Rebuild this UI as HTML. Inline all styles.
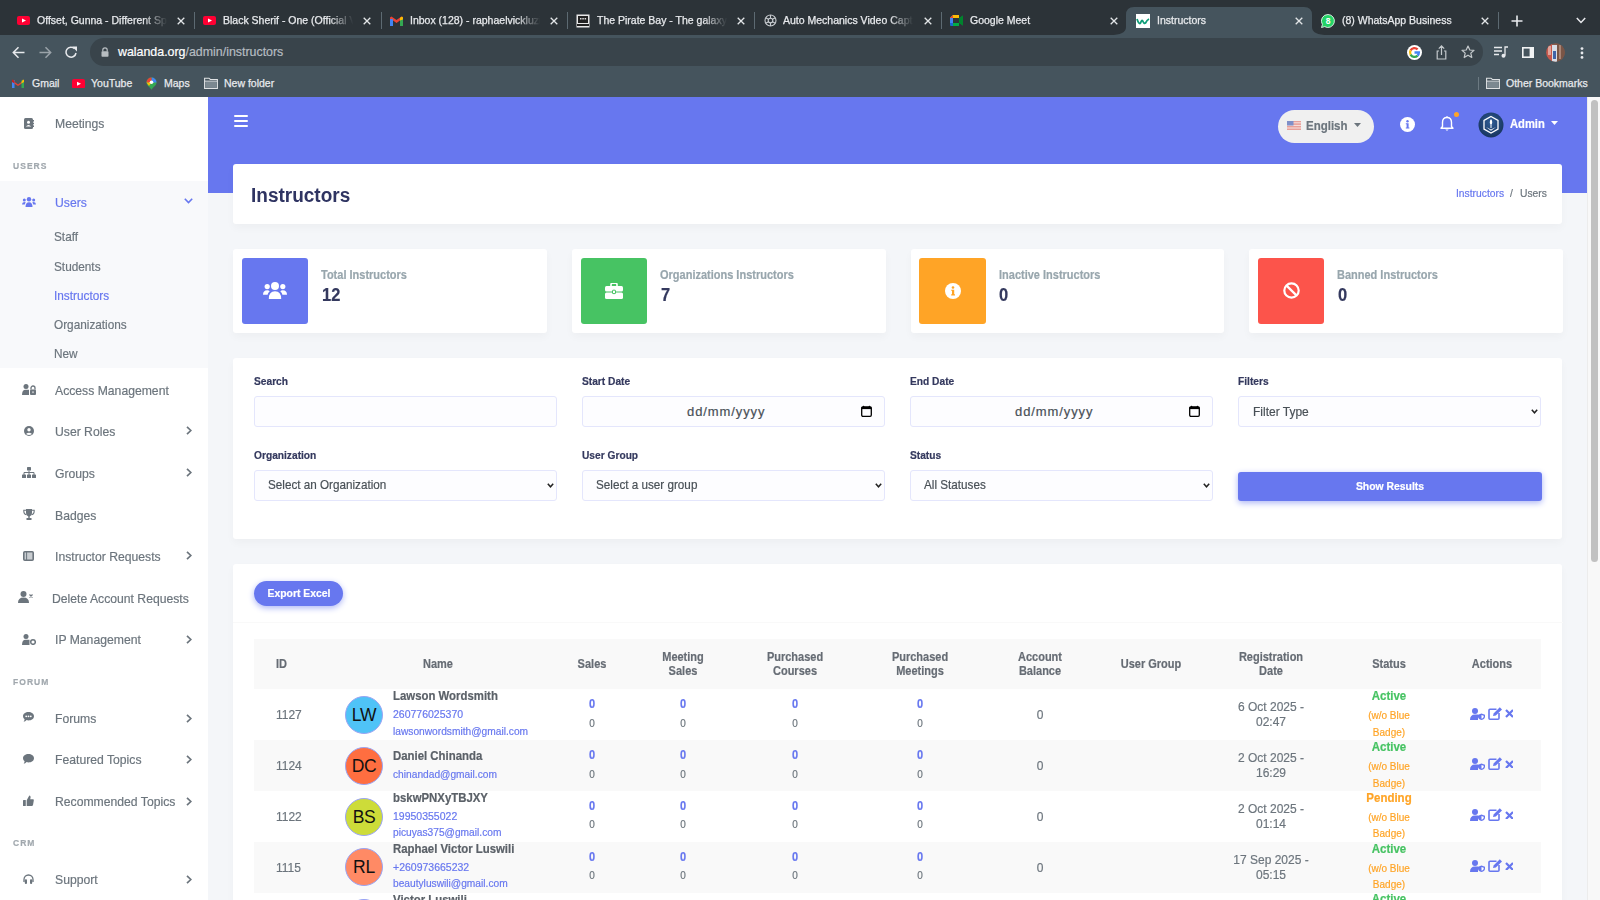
<!DOCTYPE html>
<html><head><meta charset="utf-8"><title>Instructors</title>
<style>
*{box-sizing:border-box;margin:0;padding:0}
html,body{width:1600px;height:900px;overflow:hidden;font-family:"Liberation Sans",sans-serif;background:#f4f6f9;position:relative}
.a{position:absolute}
#tabs{left:0;top:0;width:1600px;height:35px;background:#2c3338}
#tb{left:0;top:35px;width:1600px;height:62px;background:#45545d}
.x{position:absolute;width:8px;height:8px}
.sep{position:absolute;top:12px;width:1px;height:17px;background:#5d6a72}
.tt{position:absolute;top:14px;width:133px;font-size:10.5px;line-height:13px;color:#e8eaed;-webkit-text-stroke:0.25px;white-space:nowrap;overflow:hidden;-webkit-mask-image:linear-gradient(90deg,#000 80%,transparent 98%)}
.bk{position:absolute;top:42px;font-size:10.5px;line-height:13px;color:#e8eaed;-webkit-text-stroke:0.25px;white-space:nowrap}
.t{position:absolute;line-height:1;white-space:nowrap;-webkit-text-stroke:0.2px}
.av{width:38px;height:38px;border-radius:50%;border:1px solid #9aa4f3;text-align:center}
.av span{display:block;font-size:17.5px;line-height:36px;color:#111;letter-spacing:-0.3px}
</style></head><body>
<div id="page" class="a" style="left:0;top:97px;width:1600px;height:803px;background:#f4f6f9"></div>
<div class="a" style="left:0px;top:97px;width:208px;height:803px;background:#fff"></div>
<div class="a" style="left:0px;top:181px;width:208px;height:187px;background:#f8f9fb"></div>
<svg class="a" style="left:24px;top:118px" width="10" height="11" viewBox="0 10 11"><rect x="0" y="0" width="9" height="11" rx="1.5" fill="#6c757d"/><rect x="9" y="2" width="1" height="1.6" fill="#6c757d"/><rect x="9" y="4.7" width="1" height="1.6" fill="#6c757d"/><rect x="9" y="7.4" width="1" height="1.6" fill="#6c757d"/><circle cx="4.5" cy="4.3" r="1.5" fill="#fff"/><path d="M1.8 8.6 Q4.5 5.6 7.2 8.6Z" fill="#fff"/></svg>
<div class="t" style="left:55.0px;top:117.4px;font-size:13.42px;color:#6c757d;font-weight:normal;transform:scaleX(0.9091);transform-origin:0 0;">Meetings</div>
<div class="t" style="left:12.5px;top:162.4px;font-size:9.35px;color:#a1a8ae;font-weight:bold;transform:scaleX(0.9091);transform-origin:0 0;letter-spacing:1.15px">USERS</div>
<svg class="a" style="left:22px;top:197px" width="14" height="10" viewBox="0 14 10"><circle cx="7" cy="2.2" r="2.2" fill="#6777ef"/><circle cx="2.3" cy="3" r="1.5" fill="#6777ef"/><circle cx="11.7" cy="3" r="1.5" fill="#6777ef"/><path d="M3.5 10 Q3.5 5.3 7 5.3 Q10.5 5.3 10.5 10Z" fill="#6777ef"/><path d="M0 7.5 Q0 5 2.3 5 Q3.3 5 3.8 5.6 Q2.8 6.8 2.8 7.5Z" fill="#6777ef"/><path d="M14 7.5 Q14 5 11.7 5 Q10.7 5 10.2 5.6 Q11.2 6.8 11.2 7.5Z" fill="#6777ef"/></svg>
<div class="t" style="left:55.0px;top:195.9px;font-size:13.42px;color:#6777ef;font-weight:normal;transform:scaleX(0.9091);transform-origin:0 0;">Users</div>
<svg class="a" style="left:184px;top:198px" width="9" height="6" viewBox="0 9 6"><path d="M0.8 0.8L4.5 4.6L8.2 0.8" fill="none" stroke="#6777ef" stroke-width="1.6"/></svg>
<div class="t" style="left:54.0px;top:230.1px;font-size:12.98px;color:#6c757d;font-weight:normal;transform:scaleX(0.9091);transform-origin:0 0;">Staff</div>
<div class="t" style="left:54.0px;top:259.6px;font-size:12.98px;color:#6c757d;font-weight:normal;transform:scaleX(0.9091);transform-origin:0 0;">Students</div>
<div class="t" style="left:54.0px;top:288.6px;font-size:12.98px;color:#6777ef;font-weight:normal;transform:scaleX(0.9091);transform-origin:0 0;">Instructors</div>
<div class="t" style="left:54.0px;top:317.9px;font-size:12.98px;color:#6c757d;font-weight:normal;transform:scaleX(0.9091);transform-origin:0 0;">Organizations</div>
<div class="t" style="left:54.0px;top:346.8px;font-size:12.98px;color:#6c757d;font-weight:normal;transform:scaleX(0.9091);transform-origin:0 0;">New</div>
<svg class="a" style="left:22px;top:384px" width="14" height="11" viewBox="0 14 11"><circle cx="4" cy="2.5" r="2.5" fill="#6c757d"/><path d="M0 11 Q0 5.8 3.5 5.8 H7 V11Z" fill="#6c757d"/><path d="M9 5.5V4A2 2 0 0 1 13 4V5.5" fill="none" stroke="#6c757d" stroke-width="1.3"/><rect x="8" y="5.5" width="6" height="5.5" rx="1" fill="#6c757d"/><rect x="10.5" y="7.3" width="1" height="1.8" fill="#fff"/></svg>
<div class="t" style="left:55.0px;top:383.6px;font-size:13.42px;color:#6c757d;font-weight:normal;transform:scaleX(0.9091);transform-origin:0 0;">Access Management</div>
<svg class="a" style="left:24px;top:426px" width="10" height="10" viewBox="0 10 10"><circle cx="5" cy="5" r="5" fill="#6c757d"/><circle cx="5" cy="3.8" r="1.7" fill="#fff"/><path d="M2 7.9 Q5 5.5 8 7.9 Q5 10 2 7.9Z" fill="#fff"/></svg>
<div class="t" style="left:55.0px;top:425.0px;font-size:13.42px;color:#6c757d;font-weight:normal;transform:scaleX(0.9091);transform-origin:0 0;">User Roles</div>
<svg class="a" style="left:186px;top:426.0px" width="6" height="9" viewBox="0 6 9"><path d="M1 0.9L4.8 4.5L1 8.1" fill="none" stroke="#6c757d" stroke-width="1.7"/></svg>
<svg class="a" style="left:22px;top:467px" width="14" height="11" viewBox="0 14 11"><rect x="5" y="0" width="4" height="3.5" rx="0.6" fill="#6c757d"/><path d="M7 3.5V5.5M2 8V5.5H12V8M7 5.5V8" fill="none" stroke="#6c757d" stroke-width="1"/><rect x="0" y="7.5" width="4" height="3.5" rx="0.6" fill="#6c757d"/><rect x="5" y="7.5" width="4" height="3.5" rx="0.6" fill="#6c757d"/><rect x="10" y="7.5" width="4" height="3.5" rx="0.6" fill="#6c757d"/></svg>
<div class="t" style="left:55.0px;top:466.9px;font-size:13.42px;color:#6c757d;font-weight:normal;transform:scaleX(0.9091);transform-origin:0 0;">Groups</div>
<svg class="a" style="left:186px;top:468.0px" width="6" height="9" viewBox="0 6 9"><path d="M1 0.9L4.8 4.5L1 8.1" fill="none" stroke="#6c757d" stroke-width="1.7"/></svg>
<svg class="a" style="left:23px;top:509px" width="12" height="11" viewBox="0 12 11"><path d="M3 0H9V4Q9 7 6.7 7.5V9H8.5V11H3.5V9H5.3V7.5Q3 7 3 4Z" fill="#6c757d"/><path d="M3 1.2H0.8Q0.6 5 3.4 5.8M9 1.2H11.2Q11.4 5 8.6 5.8" fill="none" stroke="#6c757d" stroke-width="1.1"/></svg>
<div class="t" style="left:55.0px;top:508.6px;font-size:13.42px;color:#6c757d;font-weight:normal;transform:scaleX(0.9091);transform-origin:0 0;">Badges</div>
<svg class="a" style="left:23px;top:551px" width="11" height="10" viewBox="0 11 10"><rect x="0.8" y="0.8" width="9.4" height="8.4" rx="1" fill="#c9cdd1" stroke="#6c757d" stroke-width="1.6"/><path d="M3.6 1V9" stroke="#6c757d" stroke-width="1"/></svg>
<div class="t" style="left:55.0px;top:549.9px;font-size:13.42px;color:#6c757d;font-weight:normal;transform:scaleX(0.9091);transform-origin:0 0;">Instructor Requests</div>
<svg class="a" style="left:186px;top:551.0px" width="6" height="9" viewBox="0 6 9"><path d="M1 0.9L4.8 4.5L1 8.1" fill="none" stroke="#6c757d" stroke-width="1.7"/></svg>
<svg class="a" style="left:18px;top:591px" width="15" height="12" viewBox="0 15 12"><circle cx="5.5" cy="3" r="3" fill="#6c757d"/><path d="M0 12 Q0 6.5 5.5 6.5 Q11 6.5 11 12Z" fill="#6c757d"/><path d="M11.5 3.5L14.5 6.5M14.5 3.5L11.5 6.5" stroke="#6c757d" stroke-width="1.2"/></svg>
<div class="t" style="left:52.0px;top:591.9px;font-size:13.42px;color:#6c757d;font-weight:normal;transform:scaleX(0.9091);transform-origin:0 0;">Delete Account Requests</div>
<svg class="a" style="left:22px;top:634px" width="14" height="11" viewBox="0 14 11"><circle cx="4" cy="2.5" r="2.5" fill="#6c757d"/><path d="M0 11 Q0 5.8 3.5 5.8 H7.5 V11Z" fill="#6c757d"/><circle cx="11" cy="8" r="2.3" fill="#fff" stroke="#6c757d" stroke-width="1.5"/></svg>
<div class="t" style="left:55.0px;top:633.4px;font-size:13.42px;color:#6c757d;font-weight:normal;transform:scaleX(0.9091);transform-origin:0 0;">IP Management</div>
<svg class="a" style="left:186px;top:634.5px" width="6" height="9" viewBox="0 6 9"><path d="M1 0.9L4.8 4.5L1 8.1" fill="none" stroke="#6c757d" stroke-width="1.7"/></svg>
<div class="t" style="left:12.5px;top:677.7px;font-size:9.35px;color:#a1a8ae;font-weight:bold;transform:scaleX(0.9091);transform-origin:0 0;letter-spacing:1.15px">FORUM</div>
<svg class="a" style="left:23px;top:712px" width="11" height="10" viewBox="0 11 10"><path d="M5.5 0C8.5 0 11 1.8 11 4.2S8.5 8.4 5.5 8.4Q4.5 8.4 3.6 8.1Q2.3 9.6 0.6 9.8Q1.5 8.6 1.6 7.3Q0 6 0 4.2C0 1.8 2.5 0 5.5 0Z" fill="#6c757d"/><circle cx="3.2" cy="4.3" r="0.9" fill="#fff"/><circle cx="5.5" cy="4.3" r="0.9" fill="#fff"/><circle cx="7.8" cy="4.3" r="0.9" fill="#fff"/></svg>
<div class="t" style="left:55.0px;top:712.4px;font-size:13.42px;color:#6c757d;font-weight:normal;transform:scaleX(0.9091);transform-origin:0 0;">Forums</div>
<svg class="a" style="left:186px;top:713.5px" width="6" height="9" viewBox="0 6 9"><path d="M1 0.9L4.8 4.5L1 8.1" fill="none" stroke="#6c757d" stroke-width="1.7"/></svg>
<svg class="a" style="left:23px;top:754px" width="11" height="10" viewBox="0 11 10"><path d="M5.5 0C8.5 0 11 1.8 11 4.2S8.5 8.4 5.5 8.4Q4.5 8.4 3.6 8.1Q2.3 9.6 0.6 9.8Q1.5 8.6 1.6 7.3Q0 6 0 4.2C0 1.8 2.5 0 5.5 0Z" fill="#6c757d"/></svg>
<div class="t" style="left:55.0px;top:753.4px;font-size:13.42px;color:#6c757d;font-weight:normal;transform:scaleX(0.9091);transform-origin:0 0;">Featured Topics</div>
<svg class="a" style="left:186px;top:754.5px" width="6" height="9" viewBox="0 6 9"><path d="M1 0.9L4.8 4.5L1 8.1" fill="none" stroke="#6c757d" stroke-width="1.7"/></svg>
<svg class="a" style="left:23px;top:795px" width="11" height="11" viewBox="0 11 11"><rect x="0" y="5" width="2.8" height="6" rx="0.5" fill="#6c757d"/><path d="M3.7 5.2L6.3 0.6Q7.8 0.6 7.6 2.5L7.2 4.2H10Q11 4.3 10.8 5.5L10 10Q9.7 11 8.8 11H3.7Z" fill="#6c757d"/></svg>
<div class="t" style="left:55.0px;top:795.4px;font-size:13.42px;color:#6c757d;font-weight:normal;transform:scaleX(0.9091);transform-origin:0 0;">Recommended Topics</div>
<svg class="a" style="left:186px;top:796.5px" width="6" height="9" viewBox="0 6 9"><path d="M1 0.9L4.8 4.5L1 8.1" fill="none" stroke="#6c757d" stroke-width="1.7"/></svg>
<div class="t" style="left:12.5px;top:839.4px;font-size:9.35px;color:#a1a8ae;font-weight:bold;transform:scaleX(0.9091);transform-origin:0 0;letter-spacing:1.15px">CRM</div>
<svg class="a" style="left:23px;top:874px" width="11" height="10" viewBox="0 11 10"><path d="M1 8V5.5A4.5 4.5 0 0 1 10 5.5V8" fill="none" stroke="#6c757d" stroke-width="1.3"/><rect x="1.8" y="5.2" width="2.2" height="4.8" rx="1" fill="#6c757d"/><rect x="7" y="5.2" width="2.2" height="4.8" rx="1" fill="#6c757d"/></svg>
<div class="t" style="left:55.0px;top:873.4px;font-size:13.42px;color:#6c757d;font-weight:normal;transform:scaleX(0.9091);transform-origin:0 0;">Support</div>
<svg class="a" style="left:186px;top:874.5px" width="6" height="9" viewBox="0 6 9"><path d="M1 0.9L4.8 4.5L1 8.1" fill="none" stroke="#6c757d" stroke-width="1.7"/></svg>
<div class="a" style="left:208px;top:97px;width:1379px;height:96px;background:#6777ef"></div>
<svg class="a" style="left:234px;top:115px" width="14" height="12" viewBox="0 14 12"><rect y="0" width="14" height="2" rx="1" fill="#fff"/><rect y="5" width="14" height="2" rx="1" fill="#fff"/><rect y="10" width="14" height="2" rx="1" fill="#fff"/></svg>
<div class="a" style="left:1278px;top:110px;width:96px;height:33px;background:#f0f0f0;border-radius:17px"></div>
<svg class="a" style="left:1287px;top:121px" width="14" height="9" viewBox="0 14 9"><rect width="14" height="9" fill="#e8a09a"/><rect y="1.3" width="14" height="1" fill="#fff" opacity=".7"/><rect y="3.9" width="14" height="1" fill="#fff" opacity=".7"/><rect y="6.5" width="14" height="1" fill="#fff" opacity=".7"/><rect width="6.5" height="4.5" fill="#7f8fc9"/></svg>
<div class="t" style="left:1305.5px;top:119.5px;font-size:12.65px;color:#6c757d;font-weight:bold;transform:scaleX(0.9091);transform-origin:0 0;">English</div>
<svg class="a" style="left:1354px;top:123px" width="7" height="4" viewBox="0 7 4"><path d="M0 0H7L3.5 4Z" fill="#6c757d"/></svg>
<svg class="a" style="left:1400px;top:117px" width="15" height="15" viewBox="0 15 15"><circle cx="7.5" cy="7.5" r="7.5" fill="#fff"/><circle cx="7.5" cy="4.2" r="1.2" fill="#6777ef"/><path d="M5.8 6.3H8.6V10.6H9.4V11.6H5.8V10.6H6.6V7.3H5.8Z" fill="#6777ef"/></svg>
<svg class="a" style="left:1440px;top:116px" width="15" height="16" viewBox="0 15 16"><path d="M7 1.5Q11.5 1.5 11.5 6.5V10.5L13 12.3H1L2.5 10.5V6.5Q2.5 1.5 7 1.5Z" fill="none" stroke="#fff" stroke-width="1.4" stroke-linejoin="round"/><path d="M5.3 13.5Q7 15.8 8.7 13.5Z" fill="#fff"/><rect x="6.3" y="0" width="1.4" height="2" rx=".7" fill="#fff"/></svg>
<svg class="a" style="left:1454px;top:112px" width="5" height="5" viewBox="0 5 5"><circle cx="2.5" cy="2.5" r="2.5" fill="#ffa426"/></svg>
<svg class="a" style="left:1478px;top:112px" width="26" height="26" viewBox="0 26 26"><defs><radialGradient id="ag" cx=".5" cy=".4" r=".6"><stop offset="0" stop-color="#2f5d95"/><stop offset="1" stop-color="#17345e"/></radialGradient></defs><circle cx="13" cy="13" r="12.5" fill="url(#ag)"/><path d="M13 4.5L20 8.5V17L13 21L6 17V8.5Z" fill="none" stroke="#fff" stroke-width="1.3"/><path d="M13 7Q15.5 10 13 13.5Q10.5 10 13 7Z" fill="#fff"/><path d="M8 15L13 17.5L18 15L13 18.8Z" fill="#fff"/><rect x="12.5" y="13" width="1" height="3" fill="#fff"/></svg>
<div class="t" style="left:1510.0px;top:117.7px;font-size:12.32px;color:#fff;font-weight:bold;transform:scaleX(0.9091);transform-origin:0 0;">Admin</div>
<svg class="a" style="left:1551px;top:121px" width="7" height="4" viewBox="0 7 4"><path d="M0 0H7L3.5 4Z" fill="#fff"/></svg>
<div class="a" style="left:233.3px;top:164px;width:1329.2px;height:60.2px;background:#fff;border-radius:3px;box-shadow:0 4px 8px rgba(0,0,0,.03)"></div>
<div class="t" style="left:250.5px;top:184.6px;font-size:20.90px;color:#2f3462;font-weight:bold;transform:scaleX(0.9091);transform-origin:0 0;-webkit-text-stroke:0">Instructors</div>
<div class="t" style="left:1456.0px;top:188.4px;font-size:11.33px;color:#6777ef;font-weight:normal;transform:scaleX(0.9091);transform-origin:0 0;">Instructors</div>
<div class="t" style="left:1510.0px;top:188.4px;font-size:11.33px;color:#6c757d;font-weight:normal;transform:scaleX(0.9091);transform-origin:0 0;">/</div>
<div class="t" style="left:1520.0px;top:188.4px;font-size:11.33px;color:#6c757d;font-weight:normal;transform:scaleX(0.9091);transform-origin:0 0;">Users</div>
<div class="a" style="left:233.3px;top:249px;width:313.6px;height:83.5px;background:#fff;border-radius:3px;box-shadow:0 4px 8px rgba(0,0,0,.03)"></div>
<div class="a" style="left:242.0px;top:257.7px;width:66.2px;height:66.2px;background:#6777ef;border-radius:3px"></div>
<svg class="a" style="left:263.1px;top:281.8px" width="24" height="17" viewBox="0 24 17"><circle cx="12" cy="4" r="4" fill="#fff"/><circle cx="4.2" cy="4.6" r="2.6" fill="#fff"/><circle cx="19.8" cy="4.6" r="2.6" fill="#fff"/><path d="M5.8 17Q5.8 9.3 12 9.3Q18.2 9.3 18.2 17Z" fill="#fff"/><path d="M0 12.8Q0 8.3 4.2 8.3Q5.8 8.3 6.7 9.3Q4.8 11.2 4.6 12.8Z" fill="#fff"/><path d="M24 12.8Q24 8.3 19.8 8.3Q18.2 8.3 17.3 9.3Q19.2 11.2 19.4 12.8Z" fill="#fff"/></svg>
<div class="t" style="left:321.3px;top:269.1px;font-size:12.10px;color:#98a6ad;font-weight:bold;transform:scaleX(0.9091);transform-origin:0 0;">Total Instructors</div>
<div class="t" style="left:321.8px;top:286.1px;font-size:18.15px;color:#34395e;font-weight:bold;transform:scaleX(0.9091);transform-origin:0 0;">12</div>
<div class="a" style="left:572px;top:249px;width:313.6px;height:83.5px;background:#fff;border-radius:3px;box-shadow:0 4px 8px rgba(0,0,0,.03)"></div>
<div class="a" style="left:580.7px;top:257.7px;width:66.2px;height:66.2px;background:#47c363;border-radius:3px"></div>
<svg class="a" style="left:604.8000000000001px;top:282.8px" width="18" height="16" viewBox="0 18 16"><path d="M6 3V1.5Q6 0.3 7.2 0.3H10.8Q12 0.3 12 1.5V3" fill="none" stroke="#fff" stroke-width="1.6"/><rect x="0" y="3" width="18" height="5.5" rx="1.5" fill="#fff"/><rect x="0" y="9.5" width="18" height="6.5" rx="1.5" fill="#fff"/><rect x="7.5" y="7.2" width="3" height="3.4" rx=".5" fill="#fff" stroke="#47c363" stroke-width="1"/></svg>
<div class="t" style="left:660.0px;top:269.1px;font-size:12.10px;color:#98a6ad;font-weight:bold;transform:scaleX(0.9091);transform-origin:0 0;">Organizations Instructors</div>
<div class="t" style="left:660.5px;top:286.1px;font-size:18.15px;color:#34395e;font-weight:bold;transform:scaleX(0.9091);transform-origin:0 0;">7</div>
<div class="a" style="left:910.7px;top:249px;width:313.6px;height:83.5px;background:#fff;border-radius:3px;box-shadow:0 4px 8px rgba(0,0,0,.03)"></div>
<div class="a" style="left:919.4000000000001px;top:257.7px;width:66.2px;height:66.2px;background:#ffa426;border-radius:3px"></div>
<svg class="a" style="left:944.5000000000001px;top:282.8px" width="16" height="16" viewBox="0 16 16"><circle cx="8" cy="8" r="8" fill="#fff"/><circle cx="8" cy="4.5" r="1.3" fill="#ffa426"/><path d="M6.2 6.7H9.2V11.3H10V12.4H6.2V11.3H7V7.8H6.2Z" fill="#ffa426"/></svg>
<div class="t" style="left:998.7px;top:269.1px;font-size:12.10px;color:#98a6ad;font-weight:bold;transform:scaleX(0.9091);transform-origin:0 0;">Inactive Instructors</div>
<div class="t" style="left:999.2px;top:286.1px;font-size:18.15px;color:#34395e;font-weight:bold;transform:scaleX(0.9091);transform-origin:0 0;">0</div>
<div class="a" style="left:1249.4px;top:249px;width:313.6px;height:83.5px;background:#fff;border-radius:3px;box-shadow:0 4px 8px rgba(0,0,0,.03)"></div>
<div class="a" style="left:1258.1000000000001px;top:257.7px;width:66.2px;height:66.2px;background:#fc544b;border-radius:3px"></div>
<svg class="a" style="left:1282.7px;top:282.3px" width="17" height="17" viewBox="0 17 17"><circle cx="8.5" cy="8.5" r="7.2" fill="none" stroke="#fff" stroke-width="2.2"/><path d="M3.6 3.6L13.4 13.4" stroke="#fff" stroke-width="2.2"/></svg>
<div class="t" style="left:1337.4px;top:269.1px;font-size:12.10px;color:#98a6ad;font-weight:bold;transform:scaleX(0.9091);transform-origin:0 0;">Banned Instructors</div>
<div class="t" style="left:1337.9px;top:286.1px;font-size:18.15px;color:#34395e;font-weight:bold;transform:scaleX(0.9091);transform-origin:0 0;">0</div>
<div class="a" style="left:233.3px;top:357.7px;width:1329.2px;height:181px;background:#fff;border-radius:3px;box-shadow:0 4px 8px rgba(0,0,0,.03)"></div>
<div class="t" style="left:254.0px;top:376.0px;font-size:11.22px;color:#34395e;font-weight:bold;transform:scaleX(0.9091);transform-origin:0 0;">Search</div>
<div class="a" style="left:254px;top:396px;width:303.4px;height:31.3px;background:#fdfdff;border:1px solid #e4e6fc;border-radius:3px"></div>
<div class="t" style="left:582.0px;top:376.0px;font-size:11.22px;color:#34395e;font-weight:bold;transform:scaleX(0.9091);transform-origin:0 0;">Start Date</div>
<div class="a" style="left:582px;top:396px;width:303.4px;height:31.3px;background:#fdfdff;border:1px solid #e4e6fc;border-radius:3px"></div>
<div class="t" style="left:910.0px;top:376.0px;font-size:11.22px;color:#34395e;font-weight:bold;transform:scaleX(0.9091);transform-origin:0 0;">End Date</div>
<div class="a" style="left:910px;top:396px;width:303.4px;height:31.3px;background:#fdfdff;border:1px solid #e4e6fc;border-radius:3px"></div>
<div class="t" style="left:1238.0px;top:376.0px;font-size:11.22px;color:#34395e;font-weight:bold;transform:scaleX(0.9091);transform-origin:0 0;">Filters</div>
<div class="a" style="left:1238px;top:396px;width:303.4px;height:31.3px;background:#fdfdff;border:1px solid #e4e6fc;border-radius:3px"></div>
<div class="t" style="left:687.0px;top:404.6px;font-size:13.00px;color:#495057;font-weight:normal;transform-origin:0 0;letter-spacing:0.9px">dd/mm/yyyy</div>
<svg class="a" style="left:861px;top:405px" width="11" height="12" viewBox="0 11 12"><rect x="0.7" y="1.9" width="9.6" height="9.4" rx="1.2" fill="none" stroke="#000" stroke-width="1.3"/><rect x="0.7" y="1.9" width="9.6" height="2.2" fill="#000"/><path d="M1.5 2L2.6 0.6L3.6 2M7.4 2L8.4 0.6L9.5 2" fill="#000"/></svg>
<div class="t" style="left:1015.0px;top:404.6px;font-size:13.00px;color:#495057;font-weight:normal;transform-origin:0 0;letter-spacing:0.9px">dd/mm/yyyy</div>
<svg class="a" style="left:1189px;top:405px" width="11" height="12" viewBox="0 11 12"><rect x="0.7" y="1.9" width="9.6" height="9.4" rx="1.2" fill="none" stroke="#000" stroke-width="1.3"/><rect x="0.7" y="1.9" width="9.6" height="2.2" fill="#000"/><path d="M1.5 2L2.6 0.6L3.6 2M7.4 2L8.4 0.6L9.5 2" fill="#000"/></svg>
<div class="t" style="left:1252.7px;top:404.5px;font-size:13.20px;color:#495057;font-weight:normal;transform:scaleX(0.9091);transform-origin:0 0;">Filter Type</div>
<svg class="a" style="left:1531px;top:408.5px" width="7" height="5" viewBox="0 7 5"><path d="M0.8 0.8L3.5 3.8L6.2 0.8" fill="none" stroke="#222" stroke-width="1.5"/></svg>
<div class="t" style="left:254.0px;top:450.2px;font-size:11.22px;color:#34395e;font-weight:bold;transform:scaleX(0.9091);transform-origin:0 0;">Organization</div>
<div class="a" style="left:254px;top:470.2px;width:303.4px;height:31.3px;background:#fdfdff;border:1px solid #e4e6fc;border-radius:3px"></div>
<div class="t" style="left:268.0px;top:478.7px;font-size:12.87px;color:#495057;font-weight:normal;transform:scaleX(0.9091);transform-origin:0 0;">Select an Organization</div>
<svg class="a" style="left:547px;top:483px" width="7" height="5" viewBox="0 7 5"><path d="M0.8 0.8L3.5 3.8L6.2 0.8" fill="none" stroke="#222" stroke-width="1.5"/></svg>
<div class="t" style="left:582.0px;top:450.2px;font-size:11.22px;color:#34395e;font-weight:bold;transform:scaleX(0.9091);transform-origin:0 0;">User Group</div>
<div class="a" style="left:582px;top:470.2px;width:303.4px;height:31.3px;background:#fdfdff;border:1px solid #e4e6fc;border-radius:3px"></div>
<div class="t" style="left:596.0px;top:478.7px;font-size:12.87px;color:#495057;font-weight:normal;transform:scaleX(0.9091);transform-origin:0 0;">Select a user group</div>
<svg class="a" style="left:875px;top:483px" width="7" height="5" viewBox="0 7 5"><path d="M0.8 0.8L3.5 3.8L6.2 0.8" fill="none" stroke="#222" stroke-width="1.5"/></svg>
<div class="t" style="left:910.0px;top:450.2px;font-size:11.22px;color:#34395e;font-weight:bold;transform:scaleX(0.9091);transform-origin:0 0;">Status</div>
<div class="a" style="left:910px;top:470.2px;width:303.4px;height:31.3px;background:#fdfdff;border:1px solid #e4e6fc;border-radius:3px"></div>
<div class="t" style="left:924.0px;top:478.7px;font-size:12.87px;color:#495057;font-weight:normal;transform:scaleX(0.9091);transform-origin:0 0;">All Statuses</div>
<svg class="a" style="left:1203px;top:483px" width="7" height="5" viewBox="0 7 5"><path d="M0.8 0.8L3.5 3.8L6.2 0.8" fill="none" stroke="#222" stroke-width="1.5"/></svg>
<div class="a" style="left:1238px;top:472px;width:304px;height:29px;background:#6777ef;border-radius:3px;box-shadow:0 2px 6px #acb5f6"></div>
<div class="t" style="left:1240.0px;width:300px;text-align:center;top:481.1px;font-size:11.44px;color:#fff;font-weight:bold;transform:scaleX(0.9091);transform-origin:150px 0;">Show Results</div>
<div class="a" style="left:233.3px;top:564px;width:1329.2px;height:340px;background:#fff;border-radius:3px;box-shadow:0 4px 8px rgba(0,0,0,.03)"></div>
<div class="a" style="left:254px;top:581px;width:89px;height:25px;background:#6777ef;border-radius:13px;box-shadow:0 2px 6px #acb5f6"></div>
<div class="t" style="left:148.5px;width:300px;text-align:center;top:587.8px;font-size:11.44px;color:#fff;font-weight:bold;transform:scaleX(0.9091);transform-origin:150px 0;">Export Excel</div>
<div class="a" style="left:233px;top:622px;width:1330px;height:1px;background:#f9f9f9"></div>
<div class="a" style="left:254px;top:639px;width:1287px;height:50px;background:#f9f9f9"></div>
<div class="t" style="left:275.6px;top:657.8px;font-size:12.10px;color:#666c74;font-weight:bold;transform:scaleX(0.9091);transform-origin:0 0;">ID</div>
<div class="t" style="left:287.9px;width:300px;text-align:center;top:657.8px;font-size:12.10px;color:#666c74;font-weight:bold;transform:scaleX(0.9091);transform-origin:150px 0;">Name</div>
<div class="t" style="left:441.6px;width:300px;text-align:center;top:657.8px;font-size:12.10px;color:#666c74;font-weight:bold;transform:scaleX(0.9091);transform-origin:150px 0;">Sales</div>
<div class="t" style="left:533.0px;width:300px;text-align:center;top:651.1px;font-size:12.10px;color:#666c74;font-weight:bold;transform:scaleX(0.9091);transform-origin:150px 0;">Meeting</div>
<div class="t" style="left:533.0px;width:300px;text-align:center;top:665.1px;font-size:12.10px;color:#666c74;font-weight:bold;transform:scaleX(0.9091);transform-origin:150px 0;">Sales</div>
<div class="t" style="left:645.4px;width:300px;text-align:center;top:651.1px;font-size:12.10px;color:#666c74;font-weight:bold;transform:scaleX(0.9091);transform-origin:150px 0;">Purchased</div>
<div class="t" style="left:645.4px;width:300px;text-align:center;top:665.1px;font-size:12.10px;color:#666c74;font-weight:bold;transform:scaleX(0.9091);transform-origin:150px 0;">Courses</div>
<div class="t" style="left:769.5px;width:300px;text-align:center;top:651.1px;font-size:12.10px;color:#666c74;font-weight:bold;transform:scaleX(0.9091);transform-origin:150px 0;">Purchased</div>
<div class="t" style="left:769.5px;width:300px;text-align:center;top:665.1px;font-size:12.10px;color:#666c74;font-weight:bold;transform:scaleX(0.9091);transform-origin:150px 0;">Meetings</div>
<div class="t" style="left:890.0px;width:300px;text-align:center;top:651.1px;font-size:12.10px;color:#666c74;font-weight:bold;transform:scaleX(0.9091);transform-origin:150px 0;">Account</div>
<div class="t" style="left:890.0px;width:300px;text-align:center;top:665.1px;font-size:12.10px;color:#666c74;font-weight:bold;transform:scaleX(0.9091);transform-origin:150px 0;">Balance</div>
<div class="t" style="left:1120.7px;width:300px;text-align:center;top:651.1px;font-size:12.10px;color:#666c74;font-weight:bold;transform:scaleX(0.9091);transform-origin:150px 0;">Registration</div>
<div class="t" style="left:1120.7px;width:300px;text-align:center;top:665.1px;font-size:12.10px;color:#666c74;font-weight:bold;transform:scaleX(0.9091);transform-origin:150px 0;">Date</div>
<div class="t" style="left:1001.0px;width:300px;text-align:center;top:657.6px;font-size:12.10px;color:#666c74;font-weight:bold;transform:scaleX(0.9091);transform-origin:150px 0;">User Group</div>
<div class="t" style="left:1239.0px;width:300px;text-align:center;top:657.6px;font-size:12.10px;color:#666c74;font-weight:bold;transform:scaleX(0.9091);transform-origin:150px 0;">Status</div>
<div class="t" style="left:1341.6px;width:300px;text-align:center;top:657.6px;font-size:12.10px;color:#666c74;font-weight:bold;transform:scaleX(0.9091);transform-origin:150px 0;">Actions</div>
<div class="t" style="left:276.0px;top:708.0px;font-size:13.20px;color:#6c757d;font-weight:normal;transform:scaleX(0.9091);transform-origin:0 0;">1127</div>
<div class="a av" style="left:345px;top:695.7px;background:#4fc3f7"><span>LW</span></div>
<div class="t" style="left:392.6px;top:689.9px;font-size:12.54px;color:#5b6168;font-weight:bold;transform:scaleX(0.9091);transform-origin:0 0;">Lawson Wordsmith</div>
<div class="t" style="left:392.6px;top:708.8px;font-size:11.55px;color:#6777ef;font-weight:normal;transform:scaleX(0.9091);transform-origin:0 0;">260776025370</div>
<div class="t" style="left:392.6px;top:725.5px;font-size:11.22px;color:#6777ef;font-weight:normal;transform:scaleX(0.9091);transform-origin:0 0;">lawsonwordsmith@gmail.com</div>
<div class="t" style="left:441.6px;width:300px;text-align:center;top:698.1px;font-size:12.10px;color:#6777ef;font-weight:bold;transform:scaleX(0.9091);transform-origin:150px 0;">0</div>
<div class="t" style="left:441.6px;width:300px;text-align:center;top:717.6px;font-size:11.00px;color:#6c757d;font-weight:normal;transform:scaleX(0.9091);transform-origin:150px 0;">0</div>
<div class="t" style="left:533.0px;width:300px;text-align:center;top:698.1px;font-size:12.10px;color:#6777ef;font-weight:bold;transform:scaleX(0.9091);transform-origin:150px 0;">0</div>
<div class="t" style="left:533.0px;width:300px;text-align:center;top:717.6px;font-size:11.00px;color:#6c757d;font-weight:normal;transform:scaleX(0.9091);transform-origin:150px 0;">0</div>
<div class="t" style="left:645.4px;width:300px;text-align:center;top:698.1px;font-size:12.10px;color:#6777ef;font-weight:bold;transform:scaleX(0.9091);transform-origin:150px 0;">0</div>
<div class="t" style="left:645.4px;width:300px;text-align:center;top:717.6px;font-size:11.00px;color:#6c757d;font-weight:normal;transform:scaleX(0.9091);transform-origin:150px 0;">0</div>
<div class="t" style="left:769.5px;width:300px;text-align:center;top:698.1px;font-size:12.10px;color:#6777ef;font-weight:bold;transform:scaleX(0.9091);transform-origin:150px 0;">0</div>
<div class="t" style="left:769.5px;width:300px;text-align:center;top:717.6px;font-size:11.00px;color:#6c757d;font-weight:normal;transform:scaleX(0.9091);transform-origin:150px 0;">0</div>
<div class="t" style="left:890.0px;width:300px;text-align:center;top:708.0px;font-size:13.20px;color:#6c757d;font-weight:normal;transform:scaleX(0.9091);transform-origin:150px 0;">0</div>
<div class="t" style="left:1120.7px;width:300px;text-align:center;top:700.2px;font-size:13.20px;color:#6c757d;font-weight:normal;transform:scaleX(0.9091);transform-origin:150px 0;">6 Oct 2025 -</div>
<div class="t" style="left:1120.7px;width:300px;text-align:center;top:715.0px;font-size:13.20px;color:#6c757d;font-weight:normal;transform:scaleX(0.9091);transform-origin:150px 0;">02:47</div>
<div class="t" style="left:1239.0px;width:300px;text-align:center;top:689.8px;font-size:12.65px;color:#47c363;font-weight:bold;transform:scaleX(0.9091);transform-origin:150px 0;">Active</div>
<div class="t" style="left:1239.0px;width:300px;text-align:center;top:710.1px;font-size:11.00px;color:#ffa426;font-weight:normal;transform:scaleX(0.9091);transform-origin:150px 0;">(w/o Blue</div>
<div class="t" style="left:1239.0px;width:300px;text-align:center;top:726.6px;font-size:11.00px;color:#ffa426;font-weight:normal;transform:scaleX(0.9091);transform-origin:150px 0;">Badge)</div>
<svg class="a" style="left:1470px;top:707.5px" width="15" height="12" viewBox="0 15 12"><circle cx="5" cy="3" r="3" fill="#6777ef"/><path d="M0 12Q0 6.5 5 6.5H8V12Z" fill="#6777ef"/><path d="M11.5 5.5L15 6.8V8.5Q15 11.2 11.5 12Q8 11.2 8 8.5V6.8Z" fill="#6777ef"/><path d="M11.5 7L13.7 7.8V8.6Q13.7 10.3 11.5 10.8Z" fill="#fff"/></svg>
<svg class="a" style="left:1488px;top:706.5px" width="14" height="13" viewBox="0 14 13"><path d="M8.5 2.3H2Q1 2.3 1 3.3V11.2Q1 12.2 2 12.2H10Q11 12.2 11 11.2V6" fill="none" stroke="#6777ef" stroke-width="1.6"/><path d="M5 9L5.6 6.5L11.8 0.3L14 2.5L7.8 8.6Z" fill="#6777ef"/></svg>
<svg class="a" style="left:1504.5px;top:709.0px" width="8.5" height="8.5" viewBox="0 9 9"><path d="M1 1L8 8M8 1L1 8" stroke="#6777ef" stroke-width="2.2"/></svg>
<div class="a" style="left:254px;top:739.7px;width:1287px;height:51px;background:#f9f9f9"></div>
<div class="t" style="left:276.0px;top:758.9px;font-size:13.20px;color:#6c757d;font-weight:normal;transform:scaleX(0.9091);transform-origin:0 0;">1124</div>
<div class="a av" style="left:345px;top:746.6px;background:#ff6e40"><span>DC</span></div>
<div class="t" style="left:392.6px;top:749.6px;font-size:12.54px;color:#5b6168;font-weight:bold;transform:scaleX(0.9091);transform-origin:0 0;">Daniel Chinanda</div>
<div class="t" style="left:392.6px;top:768.5px;font-size:11.22px;color:#6777ef;font-weight:normal;transform:scaleX(0.9091);transform-origin:0 0;">chinandad@gmail.com</div>
<div class="t" style="left:441.6px;width:300px;text-align:center;top:749.0px;font-size:12.10px;color:#6777ef;font-weight:bold;transform:scaleX(0.9091);transform-origin:150px 0;">0</div>
<div class="t" style="left:441.6px;width:300px;text-align:center;top:768.5px;font-size:11.00px;color:#6c757d;font-weight:normal;transform:scaleX(0.9091);transform-origin:150px 0;">0</div>
<div class="t" style="left:533.0px;width:300px;text-align:center;top:749.0px;font-size:12.10px;color:#6777ef;font-weight:bold;transform:scaleX(0.9091);transform-origin:150px 0;">0</div>
<div class="t" style="left:533.0px;width:300px;text-align:center;top:768.5px;font-size:11.00px;color:#6c757d;font-weight:normal;transform:scaleX(0.9091);transform-origin:150px 0;">0</div>
<div class="t" style="left:645.4px;width:300px;text-align:center;top:749.0px;font-size:12.10px;color:#6777ef;font-weight:bold;transform:scaleX(0.9091);transform-origin:150px 0;">0</div>
<div class="t" style="left:645.4px;width:300px;text-align:center;top:768.5px;font-size:11.00px;color:#6c757d;font-weight:normal;transform:scaleX(0.9091);transform-origin:150px 0;">0</div>
<div class="t" style="left:769.5px;width:300px;text-align:center;top:749.0px;font-size:12.10px;color:#6777ef;font-weight:bold;transform:scaleX(0.9091);transform-origin:150px 0;">0</div>
<div class="t" style="left:769.5px;width:300px;text-align:center;top:768.5px;font-size:11.00px;color:#6c757d;font-weight:normal;transform:scaleX(0.9091);transform-origin:150px 0;">0</div>
<div class="t" style="left:890.0px;width:300px;text-align:center;top:758.9px;font-size:13.20px;color:#6c757d;font-weight:normal;transform:scaleX(0.9091);transform-origin:150px 0;">0</div>
<div class="t" style="left:1120.7px;width:300px;text-align:center;top:751.1px;font-size:13.20px;color:#6c757d;font-weight:normal;transform:scaleX(0.9091);transform-origin:150px 0;">2 Oct 2025 -</div>
<div class="t" style="left:1120.7px;width:300px;text-align:center;top:765.9px;font-size:13.20px;color:#6c757d;font-weight:normal;transform:scaleX(0.9091);transform-origin:150px 0;">16:29</div>
<div class="t" style="left:1239.0px;width:300px;text-align:center;top:740.7px;font-size:12.65px;color:#47c363;font-weight:bold;transform:scaleX(0.9091);transform-origin:150px 0;">Active</div>
<div class="t" style="left:1239.0px;width:300px;text-align:center;top:761.0px;font-size:11.00px;color:#ffa426;font-weight:normal;transform:scaleX(0.9091);transform-origin:150px 0;">(w/o Blue</div>
<div class="t" style="left:1239.0px;width:300px;text-align:center;top:777.5px;font-size:11.00px;color:#ffa426;font-weight:normal;transform:scaleX(0.9091);transform-origin:150px 0;">Badge)</div>
<svg class="a" style="left:1470px;top:758.4px" width="15" height="12" viewBox="0 15 12"><circle cx="5" cy="3" r="3" fill="#6777ef"/><path d="M0 12Q0 6.5 5 6.5H8V12Z" fill="#6777ef"/><path d="M11.5 5.5L15 6.8V8.5Q15 11.2 11.5 12Q8 11.2 8 8.5V6.8Z" fill="#6777ef"/><path d="M11.5 7L13.7 7.8V8.6Q13.7 10.3 11.5 10.8Z" fill="#fff"/></svg>
<svg class="a" style="left:1488px;top:757.4px" width="14" height="13" viewBox="0 14 13"><path d="M8.5 2.3H2Q1 2.3 1 3.3V11.2Q1 12.2 2 12.2H10Q11 12.2 11 11.2V6" fill="none" stroke="#6777ef" stroke-width="1.6"/><path d="M5 9L5.6 6.5L11.8 0.3L14 2.5L7.8 8.6Z" fill="#6777ef"/></svg>
<svg class="a" style="left:1504.5px;top:759.9px" width="8.5" height="8.5" viewBox="0 9 9"><path d="M1 1L8 8M8 1L1 8" stroke="#6777ef" stroke-width="2.2"/></svg>
<div class="t" style="left:276.0px;top:809.8px;font-size:13.20px;color:#6c757d;font-weight:normal;transform:scaleX(0.9091);transform-origin:0 0;">1122</div>
<div class="a av" style="left:345px;top:797.5px;background:#cddc39"><span>BS</span></div>
<div class="t" style="left:392.6px;top:791.7px;font-size:12.54px;color:#5b6168;font-weight:bold;transform:scaleX(0.9091);transform-origin:0 0;">bskwPNXyTBJXY</div>
<div class="t" style="left:392.6px;top:810.6px;font-size:11.55px;color:#6777ef;font-weight:normal;transform:scaleX(0.9091);transform-origin:0 0;">19950355022</div>
<div class="t" style="left:392.6px;top:827.3px;font-size:11.22px;color:#6777ef;font-weight:normal;transform:scaleX(0.9091);transform-origin:0 0;">picuyas375@gmail.com</div>
<div class="t" style="left:441.6px;width:300px;text-align:center;top:799.9px;font-size:12.10px;color:#6777ef;font-weight:bold;transform:scaleX(0.9091);transform-origin:150px 0;">0</div>
<div class="t" style="left:441.6px;width:300px;text-align:center;top:819.4px;font-size:11.00px;color:#6c757d;font-weight:normal;transform:scaleX(0.9091);transform-origin:150px 0;">0</div>
<div class="t" style="left:533.0px;width:300px;text-align:center;top:799.9px;font-size:12.10px;color:#6777ef;font-weight:bold;transform:scaleX(0.9091);transform-origin:150px 0;">0</div>
<div class="t" style="left:533.0px;width:300px;text-align:center;top:819.4px;font-size:11.00px;color:#6c757d;font-weight:normal;transform:scaleX(0.9091);transform-origin:150px 0;">0</div>
<div class="t" style="left:645.4px;width:300px;text-align:center;top:799.9px;font-size:12.10px;color:#6777ef;font-weight:bold;transform:scaleX(0.9091);transform-origin:150px 0;">0</div>
<div class="t" style="left:645.4px;width:300px;text-align:center;top:819.4px;font-size:11.00px;color:#6c757d;font-weight:normal;transform:scaleX(0.9091);transform-origin:150px 0;">0</div>
<div class="t" style="left:769.5px;width:300px;text-align:center;top:799.9px;font-size:12.10px;color:#6777ef;font-weight:bold;transform:scaleX(0.9091);transform-origin:150px 0;">0</div>
<div class="t" style="left:769.5px;width:300px;text-align:center;top:819.4px;font-size:11.00px;color:#6c757d;font-weight:normal;transform:scaleX(0.9091);transform-origin:150px 0;">0</div>
<div class="t" style="left:890.0px;width:300px;text-align:center;top:809.8px;font-size:13.20px;color:#6c757d;font-weight:normal;transform:scaleX(0.9091);transform-origin:150px 0;">0</div>
<div class="t" style="left:1120.7px;width:300px;text-align:center;top:802.0px;font-size:13.20px;color:#6c757d;font-weight:normal;transform:scaleX(0.9091);transform-origin:150px 0;">2 Oct 2025 -</div>
<div class="t" style="left:1120.7px;width:300px;text-align:center;top:816.8px;font-size:13.20px;color:#6c757d;font-weight:normal;transform:scaleX(0.9091);transform-origin:150px 0;">01:14</div>
<div class="t" style="left:1239.0px;width:300px;text-align:center;top:791.6px;font-size:12.65px;color:#ffa426;font-weight:bold;transform:scaleX(0.9091);transform-origin:150px 0;">Pending</div>
<div class="t" style="left:1239.0px;width:300px;text-align:center;top:811.9px;font-size:11.00px;color:#ffa426;font-weight:normal;transform:scaleX(0.9091);transform-origin:150px 0;">(w/o Blue</div>
<div class="t" style="left:1239.0px;width:300px;text-align:center;top:828.4px;font-size:11.00px;color:#ffa426;font-weight:normal;transform:scaleX(0.9091);transform-origin:150px 0;">Badge)</div>
<svg class="a" style="left:1470px;top:809.3px" width="15" height="12" viewBox="0 15 12"><circle cx="5" cy="3" r="3" fill="#6777ef"/><path d="M0 12Q0 6.5 5 6.5H8V12Z" fill="#6777ef"/><path d="M11.5 5.5L15 6.8V8.5Q15 11.2 11.5 12Q8 11.2 8 8.5V6.8Z" fill="#6777ef"/><path d="M11.5 7L13.7 7.8V8.6Q13.7 10.3 11.5 10.8Z" fill="#fff"/></svg>
<svg class="a" style="left:1488px;top:808.3px" width="14" height="13" viewBox="0 14 13"><path d="M8.5 2.3H2Q1 2.3 1 3.3V11.2Q1 12.2 2 12.2H10Q11 12.2 11 11.2V6" fill="none" stroke="#6777ef" stroke-width="1.6"/><path d="M5 9L5.6 6.5L11.8 0.3L14 2.5L7.8 8.6Z" fill="#6777ef"/></svg>
<svg class="a" style="left:1504.5px;top:810.8px" width="8.5" height="8.5" viewBox="0 9 9"><path d="M1 1L8 8M8 1L1 8" stroke="#6777ef" stroke-width="2.2"/></svg>
<div class="a" style="left:254px;top:841.5px;width:1287px;height:51px;background:#f9f9f9"></div>
<div class="t" style="left:276.0px;top:860.7px;font-size:13.20px;color:#6c757d;font-weight:normal;transform:scaleX(0.9091);transform-origin:0 0;">1115</div>
<div class="a av" style="left:345px;top:848.4px;background:#ff8a65"><span>RL</span></div>
<div class="t" style="left:392.6px;top:842.6px;font-size:12.54px;color:#5b6168;font-weight:bold;transform:scaleX(0.9091);transform-origin:0 0;">Raphael Victor Luswili</div>
<div class="t" style="left:392.6px;top:861.5px;font-size:11.55px;color:#6777ef;font-weight:normal;transform:scaleX(0.9091);transform-origin:0 0;">+260973665232</div>
<div class="t" style="left:392.6px;top:878.2px;font-size:11.22px;color:#6777ef;font-weight:normal;transform:scaleX(0.9091);transform-origin:0 0;">beautyluswili@gmail.com</div>
<div class="t" style="left:441.6px;width:300px;text-align:center;top:850.8px;font-size:12.10px;color:#6777ef;font-weight:bold;transform:scaleX(0.9091);transform-origin:150px 0;">0</div>
<div class="t" style="left:441.6px;width:300px;text-align:center;top:870.3px;font-size:11.00px;color:#6c757d;font-weight:normal;transform:scaleX(0.9091);transform-origin:150px 0;">0</div>
<div class="t" style="left:533.0px;width:300px;text-align:center;top:850.8px;font-size:12.10px;color:#6777ef;font-weight:bold;transform:scaleX(0.9091);transform-origin:150px 0;">0</div>
<div class="t" style="left:533.0px;width:300px;text-align:center;top:870.3px;font-size:11.00px;color:#6c757d;font-weight:normal;transform:scaleX(0.9091);transform-origin:150px 0;">0</div>
<div class="t" style="left:645.4px;width:300px;text-align:center;top:850.8px;font-size:12.10px;color:#6777ef;font-weight:bold;transform:scaleX(0.9091);transform-origin:150px 0;">0</div>
<div class="t" style="left:645.4px;width:300px;text-align:center;top:870.3px;font-size:11.00px;color:#6c757d;font-weight:normal;transform:scaleX(0.9091);transform-origin:150px 0;">0</div>
<div class="t" style="left:769.5px;width:300px;text-align:center;top:850.8px;font-size:12.10px;color:#6777ef;font-weight:bold;transform:scaleX(0.9091);transform-origin:150px 0;">0</div>
<div class="t" style="left:769.5px;width:300px;text-align:center;top:870.3px;font-size:11.00px;color:#6c757d;font-weight:normal;transform:scaleX(0.9091);transform-origin:150px 0;">0</div>
<div class="t" style="left:890.0px;width:300px;text-align:center;top:860.7px;font-size:13.20px;color:#6c757d;font-weight:normal;transform:scaleX(0.9091);transform-origin:150px 0;">0</div>
<div class="t" style="left:1120.7px;width:300px;text-align:center;top:852.9px;font-size:13.20px;color:#6c757d;font-weight:normal;transform:scaleX(0.9091);transform-origin:150px 0;">17 Sep 2025 -</div>
<div class="t" style="left:1120.7px;width:300px;text-align:center;top:867.7px;font-size:13.20px;color:#6c757d;font-weight:normal;transform:scaleX(0.9091);transform-origin:150px 0;">05:15</div>
<div class="t" style="left:1239.0px;width:300px;text-align:center;top:842.5px;font-size:12.65px;color:#47c363;font-weight:bold;transform:scaleX(0.9091);transform-origin:150px 0;">Active</div>
<div class="t" style="left:1239.0px;width:300px;text-align:center;top:862.8px;font-size:11.00px;color:#ffa426;font-weight:normal;transform:scaleX(0.9091);transform-origin:150px 0;">(w/o Blue</div>
<div class="t" style="left:1239.0px;width:300px;text-align:center;top:879.3px;font-size:11.00px;color:#ffa426;font-weight:normal;transform:scaleX(0.9091);transform-origin:150px 0;">Badge)</div>
<svg class="a" style="left:1470px;top:860.2px" width="15" height="12" viewBox="0 15 12"><circle cx="5" cy="3" r="3" fill="#6777ef"/><path d="M0 12Q0 6.5 5 6.5H8V12Z" fill="#6777ef"/><path d="M11.5 5.5L15 6.8V8.5Q15 11.2 11.5 12Q8 11.2 8 8.5V6.8Z" fill="#6777ef"/><path d="M11.5 7L13.7 7.8V8.6Q13.7 10.3 11.5 10.8Z" fill="#fff"/></svg>
<svg class="a" style="left:1488px;top:859.2px" width="14" height="13" viewBox="0 14 13"><path d="M8.5 2.3H2Q1 2.3 1 3.3V11.2Q1 12.2 2 12.2H10Q11 12.2 11 11.2V6" fill="none" stroke="#6777ef" stroke-width="1.6"/><path d="M5 9L5.6 6.5L11.8 0.3L14 2.5L7.8 8.6Z" fill="#6777ef"/></svg>
<svg class="a" style="left:1504.5px;top:861.7px" width="8.5" height="8.5" viewBox="0 9 9"><path d="M1 1L8 8M8 1L1 8" stroke="#6777ef" stroke-width="2.2"/></svg>
<div class="t" style="left:276.0px;top:911.6px;font-size:13.20px;color:#6c757d;font-weight:normal;transform:scaleX(0.9091);transform-origin:0 0;">1114</div>
<div class="a av" style="left:345px;top:899.3px;background:#6777ef"><span>VL</span></div>
<div class="t" style="left:392.6px;top:893.5px;font-size:12.54px;color:#5b6168;font-weight:bold;transform:scaleX(0.9091);transform-origin:0 0;">Victor Luswili</div>
<div class="t" style="left:392.6px;top:912.4px;font-size:11.55px;color:#6777ef;font-weight:normal;transform:scaleX(0.9091);transform-origin:0 0;"></div>
<div class="t" style="left:392.6px;top:929.1px;font-size:11.22px;color:#6777ef;font-weight:normal;transform:scaleX(0.9091);transform-origin:0 0;"></div>
<div class="t" style="left:441.6px;width:300px;text-align:center;top:901.7px;font-size:12.10px;color:#6777ef;font-weight:bold;transform:scaleX(0.9091);transform-origin:150px 0;">0</div>
<div class="t" style="left:441.6px;width:300px;text-align:center;top:921.2px;font-size:11.00px;color:#6c757d;font-weight:normal;transform:scaleX(0.9091);transform-origin:150px 0;">0</div>
<div class="t" style="left:533.0px;width:300px;text-align:center;top:901.7px;font-size:12.10px;color:#6777ef;font-weight:bold;transform:scaleX(0.9091);transform-origin:150px 0;">0</div>
<div class="t" style="left:533.0px;width:300px;text-align:center;top:921.2px;font-size:11.00px;color:#6c757d;font-weight:normal;transform:scaleX(0.9091);transform-origin:150px 0;">0</div>
<div class="t" style="left:645.4px;width:300px;text-align:center;top:901.7px;font-size:12.10px;color:#6777ef;font-weight:bold;transform:scaleX(0.9091);transform-origin:150px 0;">0</div>
<div class="t" style="left:645.4px;width:300px;text-align:center;top:921.2px;font-size:11.00px;color:#6c757d;font-weight:normal;transform:scaleX(0.9091);transform-origin:150px 0;">0</div>
<div class="t" style="left:769.5px;width:300px;text-align:center;top:901.7px;font-size:12.10px;color:#6777ef;font-weight:bold;transform:scaleX(0.9091);transform-origin:150px 0;">0</div>
<div class="t" style="left:769.5px;width:300px;text-align:center;top:921.2px;font-size:11.00px;color:#6c757d;font-weight:normal;transform:scaleX(0.9091);transform-origin:150px 0;">0</div>
<div class="t" style="left:890.0px;width:300px;text-align:center;top:911.6px;font-size:13.20px;color:#6c757d;font-weight:normal;transform:scaleX(0.9091);transform-origin:150px 0;">0</div>
<div class="t" style="left:1120.7px;width:300px;text-align:center;top:903.8px;font-size:13.20px;color:#6c757d;font-weight:normal;transform:scaleX(0.9091);transform-origin:150px 0;"></div>
<div class="t" style="left:1120.7px;width:300px;text-align:center;top:918.6px;font-size:13.20px;color:#6c757d;font-weight:normal;transform:scaleX(0.9091);transform-origin:150px 0;"></div>
<div class="t" style="left:1239.0px;width:300px;text-align:center;top:893.4px;font-size:12.65px;color:#47c363;font-weight:bold;transform:scaleX(0.9091);transform-origin:150px 0;">Active</div>
<div class="t" style="left:1239.0px;width:300px;text-align:center;top:913.7px;font-size:11.00px;color:#ffa426;font-weight:normal;transform:scaleX(0.9091);transform-origin:150px 0;">(w/o Blue</div>
<div class="t" style="left:1239.0px;width:300px;text-align:center;top:930.2px;font-size:11.00px;color:#ffa426;font-weight:normal;transform:scaleX(0.9091);transform-origin:150px 0;">Badge)</div>
<svg class="a" style="left:1470px;top:911.1px" width="15" height="12" viewBox="0 15 12"><circle cx="5" cy="3" r="3" fill="#6777ef"/><path d="M0 12Q0 6.5 5 6.5H8V12Z" fill="#6777ef"/><path d="M11.5 5.5L15 6.8V8.5Q15 11.2 11.5 12Q8 11.2 8 8.5V6.8Z" fill="#6777ef"/><path d="M11.5 7L13.7 7.8V8.6Q13.7 10.3 11.5 10.8Z" fill="#fff"/></svg>
<svg class="a" style="left:1488px;top:910.1px" width="14" height="13" viewBox="0 14 13"><path d="M8.5 2.3H2Q1 2.3 1 3.3V11.2Q1 12.2 2 12.2H10Q11 12.2 11 11.2V6" fill="none" stroke="#6777ef" stroke-width="1.6"/><path d="M5 9L5.6 6.5L11.8 0.3L14 2.5L7.8 8.6Z" fill="#6777ef"/></svg>
<svg class="a" style="left:1504.5px;top:912.6px" width="8.5" height="8.5" viewBox="0 9 9"><path d="M1 1L8 8M8 1L1 8" stroke="#6777ef" stroke-width="2.2"/></svg>
<div class="a" style="left:1587px;top:97px;width:13px;height:803px;background:#f8f8f8;border-left:1px solid #ececec"></div>
<div class="a" style="left:1591px;top:100px;width:6.5px;height:462px;background:#c1c1c1;border-radius:4px"></div>
<div id="tabs" class="a">
  <!-- active tab bg -->
  <svg class="a" style="left:1110px;top:0" width="218" height="35" viewBox="0 0 218 35">
    <path d="M0 35 Q16 35 16 27 L16 15 Q16 7 24 7 L194 7 Q202 7 202 15 L202 27 Q202 35 218 35 Z" fill="#45545d"/>
  </svg>
  <!-- tab 1 -->
  <svg class="a" style="left:17px;top:16px" width="13" height="9" viewBox="0 0 13 9"><rect width="13" height="9" rx="2" fill="#ff0033"/><path d="M5 2.5 L9 4.5 L5 6.5Z" fill="#fff"/></svg>
  <div class="tt" style="left:37px">Offset, Gunna - Different Sp</div>
  <svg class="x" style="left:177px;top:17px" viewBox="0 0 8 8"><path d="M0.7 0.7L7.3 7.3M7.3 0.7L0.7 7.3" stroke="#e3e6e8" stroke-width="1.3"/></svg>
  <div class="sep" style="left:194px"></div>
  <!-- tab 2 -->
  <svg class="a" style="left:203px;top:16px" width="13" height="9" viewBox="0 0 13 9"><rect width="13" height="9" rx="2" fill="#ff0033"/><path d="M5 2.5 L9 4.5 L5 6.5Z" fill="#fff"/></svg>
  <div class="tt" style="left:223px">Black Sherif - One (Official V</div>
  <svg class="x" style="left:363px;top:17px" viewBox="0 0 8 8"><path d="M0.7 0.7L7.3 7.3M7.3 0.7L0.7 7.3" stroke="#e3e6e8" stroke-width="1.3"/></svg>
  <div class="sep" style="left:381px"></div>
  <!-- tab 3 gmail -->
  <svg class="a" style="left:390px;top:16px" width="13" height="10" viewBox="0 0 13 10"><path d="M0 1.5 V10 H3 V4.5 L6.5 7 L10 4.5 V10 H13 V1.5 L11.5 0.5 L6.5 4 L1.5 0.5Z" fill="#ea4335"/><rect x="0" y="3" width="3" height="7" fill="#4285f4"/><rect x="10" y="3" width="3" height="7" fill="#34a853"/><path d="M10 1.7 L12 0.6 L13 1.5 V3.5 L10 4.5Z" fill="#fbbc04"/></svg>
  <div class="tt" style="left:410px">Inbox (128) - raphaelvickluzi</div>
  <svg class="x" style="left:550px;top:17px" viewBox="0 0 8 8"><path d="M0.7 0.7L7.3 7.3M7.3 0.7L0.7 7.3" stroke="#e3e6e8" stroke-width="1.3"/></svg>
  <div class="sep" style="left:567px"></div>
  <!-- tab 4 pirate -->
  <svg class="a" style="left:576px;top:14px" width="14" height="14" viewBox="0 0 14 14"><rect x="0.5" y="0.5" width="13" height="13" fill="#e8e8e8"/><rect x="2" y="2" width="10" height="7" fill="#222"/><rect x="4" y="4" width="1.5" height="1.5" fill="#ddd"/><rect x="6.3" y="4" width="1.5" height="1.5" fill="#ddd"/><rect x="8.6" y="4" width="1.5" height="1.5" fill="#ddd"/><rect x="1" y="10" width="12" height="2" fill="#222"/></svg>
  <div class="tt" style="left:597px">The Pirate Bay - The galaxy's</div>
  <svg class="x" style="left:737px;top:17px" viewBox="0 0 8 8"><path d="M0.7 0.7L7.3 7.3M7.3 0.7L0.7 7.3" stroke="#e3e6e8" stroke-width="1.3"/></svg>
  <div class="sep" style="left:754px"></div>
  <!-- tab 5 openai -->
  <svg class="a" style="left:764px;top:14px" width="13" height="13" viewBox="0 0 13 13"><g fill="none" stroke="#c8ccd0" stroke-width="1.1"><circle cx="6.5" cy="6.5" r="5.5"/><circle cx="6.5" cy="6.5" r="2.3"/><path d="M6.5 1 V4.2 M11.3 3.8 L8.5 5.3 M11.3 9.2 L8.5 7.7 M6.5 12 V8.8 M1.7 9.2 L4.5 7.7 M1.7 3.8 L4.5 5.3"/></g></svg>
  <div class="tt" style="left:783px">Auto Mechanics Video Captio</div>
  <svg class="x" style="left:924px;top:17px" viewBox="0 0 8 8"><path d="M0.7 0.7L7.3 7.3M7.3 0.7L0.7 7.3" stroke="#e3e6e8" stroke-width="1.3"/></svg>
  <div class="sep" style="left:941px"></div>
  <!-- tab 6 meet -->
  <svg class="a" style="left:950px;top:15px" width="13" height="11" viewBox="0 0 13 11"><path d="M0 3 L3 0 H9 V3.5 L13 0.5 V10.5 L9 7.5 V11 H1.5 Q0 11 0 9.5Z" fill="#00ac47"/><path d="M0 3 L3 0 H9 V3 H0Z" fill="#fbbc04"/><path d="M0 3 H3 V8 H0Z" fill="#4285f4"/><path d="M0 8 H3 V11 H1.5 Q0 11 0 9.5Z" fill="#1967d2"/><path d="M3 0 V3 H0Z" fill="#ea4335"/><rect x="3" y="3" width="6" height="5" fill="#2c3338"/><path d="M9 3 V8 L13 10.5 V0.5Z" fill="#00832d"/></svg>
  <div class="tt" style="left:970px">Google Meet</div>
  <svg class="x" style="left:1110px;top:17px" viewBox="0 0 8 8"><path d="M0.7 0.7L7.3 7.3M7.3 0.7L0.7 7.3" stroke="#e3e6e8" stroke-width="1.3"/></svg>
  <!-- tab 7 active -->
  <svg class="a" style="left:1136px;top:14px" width="14" height="14" viewBox="0 0 14 14"><rect width="14" height="14" fill="#fff"/><path d="M1 5 Q3 11 4.5 9 Q6 5 7 7.5 Q8 10 9.5 9 Q11 6 13 5" fill="none" stroke="#0f9d78" stroke-width="1.8"/></svg>
  <div class="tt" style="left:1157px">Instructors</div>
  <svg class="x" style="left:1295px;top:17px" viewBox="0 0 8 8"><path d="M0.7 0.7L7.3 7.3M7.3 0.7L0.7 7.3" stroke="#e3e6e8" stroke-width="1.3"/></svg>
  <!-- tab 8 whatsapp -->
  <svg class="a" style="left:1321px;top:14px" width="14" height="14" viewBox="0 0 14 14"><path d="M7 0.5 A6.5 6.5 0 1 1 3.6 12.6 L0.5 13.5 L1.4 10.5 A6.5 6.5 0 0 1 7 0.5Z" fill="#25d366" stroke="#fff" stroke-width="0.8"/><text x="7" y="10.3" font-size="8.5" font-family="Liberation Sans" font-weight="bold" fill="#fff" text-anchor="middle">8</text></svg>
  <div class="tt" style="left:1342px">(8) WhatsApp Business</div>
  <svg class="x" style="left:1481px;top:17px" viewBox="0 0 8 8"><path d="M0.7 0.7L7.3 7.3M7.3 0.7L0.7 7.3" stroke="#e3e6e8" stroke-width="1.3"/></svg>
  <div class="sep" style="left:1498px"></div>
  <svg class="a" style="left:1511px;top:15px" width="12" height="12" viewBox="0 0 12 12"><path d="M6 0.5V11.5M0.5 6H11.5" stroke="#e8eaed" stroke-width="1.6"/></svg>
  <svg class="a" style="left:1576px;top:17px" width="10" height="7" viewBox="0 0 10 7"><path d="M0.8 1L5 5.5L9.2 1" fill="none" stroke="#e8eaed" stroke-width="1.5"/></svg>
</div>
<div id="tb" class="a">
  <svg class="a" style="left:12px;top:11px" width="13" height="13" viewBox="0 0 13 13"><path d="M12.5 6.5H1.5M6.5 1.3L1.3 6.5L6.5 11.7" fill="none" stroke="#e8eaed" stroke-width="1.5"/></svg>
  <svg class="a" style="left:39px;top:11px" width="13" height="13" viewBox="0 0 13 13"><path d="M0.5 6.5H11.5M6.5 1.3L11.7 6.5L6.5 11.7" fill="none" stroke="#9aa3a9" stroke-width="1.5"/></svg>
  <svg class="a" style="left:65px;top:11px" width="13" height="13" viewBox="0 0 13 13"><path d="M11 7 A5 5 0 1 1 9.6 2.6" fill="none" stroke="#e8eaed" stroke-width="1.5"/><path d="M7.2 0.6 H12 V5.4Z" fill="#e8eaed"/></svg>
  <div class="a" style="left:90px;top:3px;width:1393px;height:28px;border-radius:14px;background:#39444b"></div>
  <svg class="a" style="left:101px;top:12px" width="8" height="10" viewBox="0 0 8 10"><path d="M1.8 4.5V3A2.2 2.2 0 0 1 6.2 3V4.5" fill="none" stroke="#b7bdc1" stroke-width="1.2"/><rect x="0.5" y="4.3" width="7" height="5.5" rx="0.8" fill="#b7bdc1"/></svg>
  <div class="a" style="left:118px;top:10px;font-size:12.4px;line-height:15px;color:#fff;white-space:nowrap;-webkit-text-stroke:0.2px">walanda.org<span style="color:#b5bcc1">/admin/instructors</span></div>
  <svg class="a" style="left:1407px;top:10px" width="15" height="15" viewBox="0 0 15 15"><circle cx="7.5" cy="7.5" r="7.5" fill="#fff"/><g fill="none" stroke-width="2.3"><path d="M10.6 4.4 A4.4 4.4 0 0 0 3.6 5.4" stroke="#ea4335"/><path d="M3.6 5.4 A4.4 4.4 0 0 0 3.6 9.6" stroke="#fbbc05"/><path d="M3.6 9.6 A4.4 4.4 0 0 0 10.6 10.6" stroke="#34a853"/><path d="M10.6 10.6 A4.4 4.4 0 0 0 11.9 7.5 H7.5" stroke="#4285f4"/></g></svg>
  <svg class="a" style="left:1436px;top:10px" width="11" height="15" viewBox="0 0 11 15"><path d="M3 6H1.2V14H9.8V6H8M5.5 10V1M2.8 3.6L5.5 0.9L8.2 3.6" fill="none" stroke="#c4c9cc" stroke-width="1.2"/></svg>
  <svg class="a" style="left:1461px;top:10px" width="14" height="14" viewBox="0 0 14 14"><path d="M7 1L8.8 5L13 5.3L9.8 8.1L10.8 12.5L7 10.2L3.2 12.5L4.2 8.1L1 5.3L5.2 5Z" fill="none" stroke="#c4c9cc" stroke-width="1.2" stroke-linejoin="round"/></svg>
  <svg class="a" style="left:1494px;top:11px" width="15" height="12" viewBox="0 0 15 12"><path d="M0 1.5H8M0 5H8M0 8.5H5" stroke="#e8eaed" stroke-width="1.3"/><path d="M11 9.5V1H14" fill="none" stroke="#e8eaed" stroke-width="1.3"/><circle cx="9.5" cy="9.8" r="2" fill="#e8eaed"/></svg>
  <svg class="a" style="left:1522px;top:11.5px" width="12" height="11" viewBox="0 0 12 11"><rect x="0.8" y="0.8" width="10.4" height="9.4" fill="none" stroke="#f1f3f4" stroke-width="1.6"/><rect x="7.6" y="0.8" width="3.6" height="9.4" fill="#f1f3f4"/></svg>
  <svg class="a" style="left:1545.5px;top:8px" width="19" height="19" viewBox="0 0 19 19"><defs><clipPath id="avc"><circle cx="9.5" cy="9.5" r="9.3"/></clipPath></defs><g clip-path="url(#avc)"><rect width="19" height="19" fill="#8a5a4a"/><rect x="0" y="0" width="6" height="19" fill="#c6584e"/><rect x="2" y="3" width="3" height="9" fill="#e0a49a"/><rect x="6" y="2" width="5" height="17" fill="#d9dde6"/><rect x="7" y="8" width="3" height="8" fill="#3f63a8"/><rect x="11" y="0" width="8" height="19" fill="#7a5546"/><rect x="13" y="2" width="2" height="14" fill="#a98576"/></g></svg>
  <svg class="a" style="left:1580px;top:12px" width="4" height="12" viewBox="0 0 4 12"><circle cx="2" cy="1.6" r="1.4" fill="#e8eaed"/><circle cx="2" cy="6" r="1.4" fill="#e8eaed"/><circle cx="2" cy="10.4" r="1.4" fill="#e8eaed"/></svg>
  <!-- bookmarks -->
  <svg class="a" style="left:12px;top:44px" width="12" height="9" viewBox="0 0 12 9"><path d="M0 1 L6 5.5 L12 1 V3 L6 7 L0 3Z" fill="#ea4335"/><rect x="0" y="1" width="2.5" height="8" fill="#4285f4"/><rect x="9.5" y="1" width="2.5" height="8" fill="#34a853"/><path d="M9.5 2.8 L11 0.5 L12 1 V3 L9.5 4.5Z" fill="#fbbc04"/><path d="M0 1 L1 0.5 L2.5 2 V4.5 L0 3Z" fill="#c5221f"/></svg>
  <div class="bk" style="left:32px">Gmail</div>
  <svg class="a" style="left:72px;top:43.5px" width="13" height="9.5" viewBox="0 0 13 9.5"><rect width="13" height="9.5" rx="2" fill="#ff0033"/><path d="M5 2.7 L9 4.75 L5 6.8Z" fill="#fff"/></svg>
  <div class="bk" style="left:91px">YouTube</div>
  <svg class="a" style="left:146px;top:42px" width="11" height="13" viewBox="0 0 11 13"><path d="M5.5 0.5 A5 5 0 0 1 10.5 5.5 C10.5 8.5 7 10 5.5 12.8 C4 10 0.5 8.5 0.5 5.5 A5 5 0 0 1 5.5 0.5Z" fill="#34a853"/><path d="M5.5 0.5 A5 5 0 0 1 10.5 5.5 L5.5 5.5Z" fill="#4285f4"/><path d="M0.5 5.5 A5 5 0 0 1 5.5 0.5 L5.5 5.5Z" fill="#ea4335"/><path d="M0.5 5.5 H5.5 L3 9Z" fill="#fbbc04"/><circle cx="5.5" cy="5.3" r="1.8" fill="#fff"/></svg>
  <div class="bk" style="left:164px">Maps</div>
  <svg class="a" style="left:204px;top:42px" width="14" height="12" viewBox="0 0 14 12"><path d="M0.6 1.2H5L6.3 2.5H13.4V11.4H0.6Z" fill="none" stroke="#dfe2e4" stroke-width="1.1"/><path d="M0.6 4.2H13.4" stroke="#dfe2e4" stroke-width="1.1"/><rect x="1.2" y="4.8" width="11.6" height="6" fill="#7b8890"/></svg>
  <div class="bk" style="left:224px">New folder</div>
  <div class="a" style="left:1478px;top:42px;width:1px;height:13px;background:#6c7a82"></div>
  <svg class="a" style="left:1486px;top:42px" width="14" height="12" viewBox="0 0 14 12"><path d="M0.6 1.2H5L6.3 2.5H13.4V11.4H0.6Z" fill="none" stroke="#dfe2e4" stroke-width="1.1"/><path d="M0.6 4.2H13.4" stroke="#dfe2e4" stroke-width="1.1"/><rect x="1.2" y="4.8" width="11.6" height="6" fill="#7b8890"/></svg>
  <div class="bk" style="left:1506px">Other Bookmarks</div>
</div>

</body></html>
